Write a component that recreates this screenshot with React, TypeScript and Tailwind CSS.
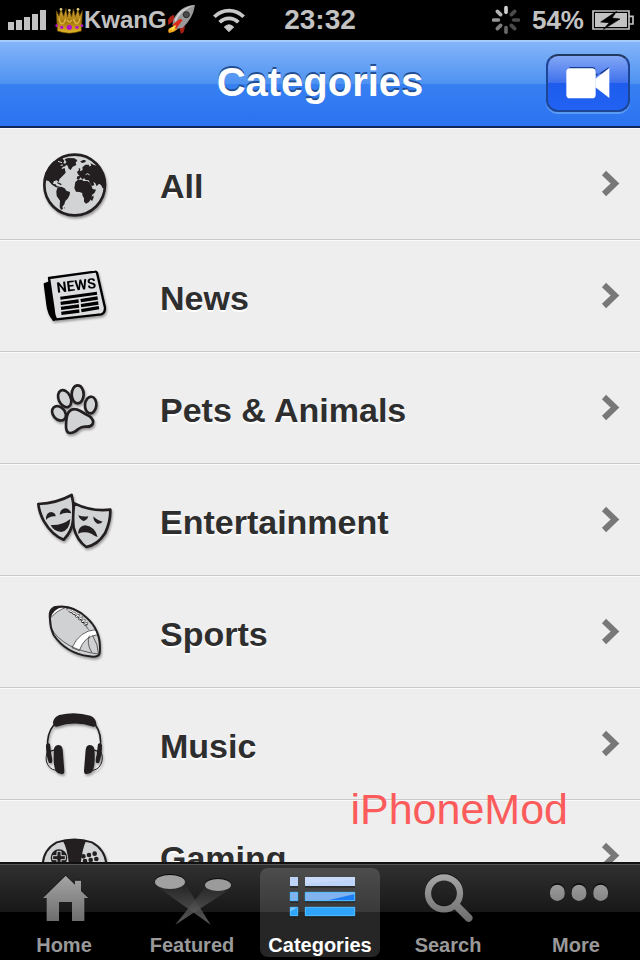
import clsx from "clsx";
import { ReactNode, useState } from "react";

const categories = [
  { label: "All", icon: <GlobeIcon /> },
  { label: "News", icon: <NewsIcon /> },
  { label: "Pets & Animals", icon: <PawIcon /> },
  { label: "Entertainment", icon: <MasksIcon /> },
  { label: "Sports", icon: <FootballIcon /> },
  { label: "Music", icon: <HeadphonesIcon /> },
  { label: "Gaming", icon: <GamepadIcon /> },
];

const tabs = [
  { label: "Home", icon: <HomeIcon /> },
  { label: "Featured", icon: <SpotlightsIcon /> },
  { label: "Categories", icon: <ListIcon /> },
  { label: "Search", icon: <SearchIcon /> },
  { label: "More", icon: <MoreIcon /> },
];

export default function App() {
  const [tab, setTab] = useState("Categories");

  return (
    <div className="flex h-screen flex-col bg-[#eeeeee] font-['Liberation_Sans',Arial,sans-serif]">
      <StatusBar />
      <NavBar title={tab} />
      <main className="relative min-h-0 flex-1 overflow-hidden">
        <ul>
          {categories.map((c) => (
            <li key={c.label}>
              <a
                href="#"
                className="flex h-28 items-center border-t border-b border-t-[#fafafa] border-b-[#c9c9c9] pr-5 pl-[30px]"
              >
                {c.icon}
                <span className="flex-1 pt-1 pl-[30px] text-[34px] leading-10 font-bold text-[#2e2e2e] [text-shadow:0_2px_0_#fff]">
                  {c.label}
                </span>
                <svg width="20" height="28" viewBox="0 0 20 28" aria-hidden="true">
                  <path d="M4 3 15 13.5 4 24" fill="none" stroke="#787878" strokeWidth="6" />
                </svg>
              </a>
            </li>
          ))}
        </ul>
        <p className="absolute right-[72px] bottom-7 text-[43px] leading-[50px] text-[#fc5b5b]">iPhoneMod</p>
      </main>
      <TabBar current={tab} onChange={(v) => setTab(v)} />
    </div>
  );
}

function StatusBar() {
  return (
    <header className="grid h-10 grid-cols-[1fr_auto_1fr] items-center bg-black px-[6px] font-bold text-[#c2c2c2]">
      <div className="flex items-center pl-[2px]">
        <svg width="38" height="20" viewBox="0 0 38 20" fill="#c2c2c2" aria-label="Signal">
          <path d="M0 12h6v8H0zM8 10h6v10H8zM16 7h6v13h-6zM24 4h6v16h-6zM32 0h6v20h-6z" />
        </svg>
        <CrownIcon />
        <span className="text-2xl">KwanG</span>
        <RocketIcon />
        <svg className="ml-4" width="32" height="24" viewBox="0 0 96 72" fill="none" stroke="#c8c8c8" aria-label="Wi-Fi">
          <path d="M4 26a62 62 0 0 1 88 0" strokeWidth="11" />
          <path d="M20 43a39 39 0 0 1 56 0" strokeWidth="11" />
          <path d="M48 71 34 57q14-13 28 0z" fill="#c8c8c8" stroke="#c8c8c8" strokeWidth="3" />
        </svg>
      </div>
      <time className="text-[28px] leading-8">23:32</time>
      <div className="flex items-center justify-end">
        <svg width="28" height="30" viewBox="-42 -45 84 90" strokeWidth="11" strokeLinecap="round" aria-label="Loading">
          <path d="M0-23V-37" stroke="#d0d0d0" />
          <path d="M16-16 26-26" stroke="#4a4a4a" />
          <path d="M23 0H37" stroke="#4a4a4a" />
          <path d="M16 16 26 26" stroke="#4a4a4a" />
          <path d="M0 23V37" stroke="#666" />
          <path d="M-16 16-26 26" stroke="#7e7e7e" />
          <path d="M-23 0H-37" stroke="#989898" />
          <path d="M-16-16-26-26" stroke="#b4b4b4" />
        </svg>
        <span className="ml-3 text-[26px] leading-8">54%</span>
        <svg className="ml-2" width="42" height="20" viewBox="0 0 126 60" aria-label="Battery charging">
          <path d="M3 3h108v54H3zM112 19h11v23h-11" fill="none" stroke="#c2c2c2" strokeWidth="5" />
          <path d="M9 9h96v42H9z" fill="#c2c2c2" />
          <path d="M74 4 26 36l26 2-18 20 50-31-24-3z" fill="#000" stroke="#000" strokeWidth="2" />
        </svg>
      </div>
    </header>
  );
}

function NavBar({ title }: { title: string }) {
  return (
    <div className="grid h-22 grid-cols-[84px_1fr_84px] items-center border-t-2 border-b-2 border-t-[#a6ccfc] border-b-[#10275a] bg-[linear-gradient(to_bottom,#84b4f8_0%,#4d92f2_50%,#3780f2_50%,#2b73f0_100%)] px-[10px]">
      <h1 className="col-start-2 pb-1 text-center text-[40px] leading-[48px] font-bold text-white [text-shadow:0_-2px_0_#234e93]">
        {title}
      </h1>
      <button
        type="button"
        aria-label="Record video"
        className="mb-[2px] flex h-[58px] items-center justify-center rounded-xl border-2 border-[#1d4696] border-t-[#24395f] bg-[linear-gradient(to_bottom,#83a7f5_0%,#3e70ec_50%,#1d5cec_50%,#2262f2_100%)] shadow-[0_2px_0_#5b9bf5]"
      >
        <svg width="44" height="34" viewBox="0 0 132 102" aria-hidden="true">
          <path d="M10 3h70q8 0 8 8v20l40-28v20H10z" fill="#173c92" />
          <rect x="1" y="7" width="88" height="90" rx="11" fill="#fff" />
          <path d="M88 38 130 6v90L88 64z" fill="#fff" />
        </svg>
      </button>
    </div>
  );
}

function TabBar({ current, onChange }: { current: string; onChange: (v: string) => void }) {
  return (
    <nav className="border-t-2 border-[#111]">
      <div className="grid grid-cols-5 border-t border-[#555] bg-[linear-gradient(to_bottom,#303030_0%,#171717_50%,#000_50%)] pt-[3px] pb-[3px]">
        {tabs.map((t) => (
          <button
            key={t.label}
            type="button"
            aria-current={current === t.label ? "page" : undefined}
            onClick={() => onChange(t.label)}
            className={clsx(
              "mx-1 flex flex-col items-center rounded-lg pt-[2px] text-xl leading-6 font-bold",
              current === t.label ? "bg-white/15 text-white" : "text-[#999]"
            )}
          >
            {t.icon}
            <span className="mt-[7px]">{t.label}</span>
          </button>
        ))}
      </div>
    </nav>
  );
}

function RowIcon({ viewBox, children }: { viewBox: string; children: ReactNode }) {
  return (
    <svg
      width="100"
      height="90"
      viewBox={viewBox}
      strokeLinejoin="round"
      aria-hidden="true"
      className="drop-shadow-[1px_2px_1px_rgba(0,0,0,0.35)]"
    >
      {children}
    </svg>
  );
}

function GlobeIcon() {
  return (
    <RowIcon viewBox="0 -5 300 270">
      <circle cx="134" cy="133" r="92" fill="#d1d3d5" />
      <g fill="#231f20">
        <path d="M43 118 46 98 58 76 72 61 80 62 86 53 96 52 103 60 100 68 109 70 106 77 98 79 94 86 104 82 107 96 100 104 94 110 88 116 87 124 80 119 71 122 69 130 77 131 80 136 92 139 90 142 78 140 66 132 56 121z" />
        <path d="M82 124 95 130 93 134 82 128zM78 70 88 64 92 70 84 76z" />
        <path d="M104 56 114 52 133 53 142 59 137 66 139 73 128 78 122 88 116 84 113 75 105 71 109 64z" />
        <path d="M82 142 94 138 104 143 109 150 120 154 119 163 113 174 106 181 103 191 97 198 99 205 93 207 89 199 90 180 80 166 79 152zM101 200 105 201 104 204z" />
        <path d="M141 94 147 88 146 82 151 84 150 92 158 88 157 80 166 72 176 72 179 78 184 74 181 67 190 72 200 75 212 86 222 110 225 142 218 143 213 133 207 129 200 137 196 128 190 123 193 133 185 137 180 127 176 119 167 118 162 112 158 117 152 110 146 117 140 115 142 107 149 106 144 101z" />
        <path d="M136 124 144 117 156 117 160 121 172 121 180 126 188 145 198 147 194 156 186 163 185 171 177 184 168 189 162 183 162 173 157 164 157 157 148 154 138 153 133 143zM183 171 190 164 191 170 187 180 182 179z" />
        <path d="M150 63 159 58 166 58 167 64 157 67zM162 90 168 88 170 94 164 95z" />
      </g>
      <path d="M84 62 96 66M92 74 99 73M167 102 173 99 179 103" fill="none" stroke="#d1d3d5" strokeWidth="3" />
      <circle cx="134" cy="133" r="91" fill="none" stroke="#231f20" strokeWidth="8" />
    </RowIcon>
  );
}

function NewsIcon() {
  return (
    <RowIcon viewBox="0 -12 300 270">
      <path d="M44 87 61 81 78 192 71 195Q55 177 52 150z" stroke="#000" strokeWidth="6" />
      <path d="M57 69 195 50Q199 49 201 53L225 158Q225 175 213 178L79 193Q72 184 71 164z" fill="#dcdee0" stroke="#000" strokeWidth="7" />
      <text x="82" y="113" fontSize="43" fontWeight="bold" fontFamily="Roboto, sans-serif" transform="rotate(-7 82 113)">
        NEWS
      </text>
      <path d="M91 130 201 115" stroke="#000" strokeWidth="9" />
      <path
        d="M92 145 146 138M93 160 147 153M94 175 148 168M152 137 203 129M153 152 205 144M154 167 207 158"
        stroke="#000"
        strokeWidth="10"
      />
    </RowIcon>
  );
}

function PawIcon() {
  return (
    <RowIcon viewBox="0 -21 300 270">
      <g fill="#d1d3d5" stroke="#231f20" strokeWidth="8">
        <ellipse cx="143" cy="73" rx="18" ry="27" />
        <ellipse cx="104" cy="86" rx="18" ry="27" transform="rotate(-25 104 86)" />
        <ellipse cx="182" cy="105" rx="17" ry="25" transform="rotate(6 182 105)" />
        <ellipse cx="87" cy="130" rx="18" ry="24" transform="rotate(-42 87 130)" />
        <path d="M116 126Q130 110 151 123 164 131 179 139 193 150 188 162 183 171 168 170 155 169 145 177 131 190 118 189 108 187 108 169 108 139 116 126z" />
      </g>
    </RowIcon>
  );
}

function MasksIcon() {
  return (
    <RowIcon viewBox="0 -15 300 270">
      <path d="M25 72Q82 69 125 45 134 80 130 117 126 155 101 179 66 165 42 124 28 99 25 72z" fill="#d1d3d5" stroke="#231f20" strokeWidth="8" />
      <path d="M133 70Q183 95 241 89 242 124 225 160 203 195 169 201 142 183 131 143 127 107 133 70z" fill="#d1d3d5" stroke="#231f20" strokeWidth="8" />
      <g fill="#231f20">
        <path d="M48 120Q47 96 65 96 77 99 77 109 59 107 48 120zM89 104Q91 87 105 85 120 86 124 100 106 95 89 104z" />
        <path d="M62 135Q96 137 121 117 119 151 94 156 71 154 62 135z" />
        <path d="M145 106Q159 111 175 109 171 122 160 123 149 119 145 106zM190 109Q200 121 218 125 211 133 202 131 190 125 190 109z" />
        <path d="M144 161Q145 138 166 136 196 141 203 171 195 169 184 161 164 153 144 161z" />
      </g>
    </RowIcon>
  );
}

function FootballIcon() {
  return (
    <RowIcon viewBox="0 -9 300 270">
      <path d="M60 88Q56 59 72 52 125 40 170 83 216 124 209 190 205 203 178 199 108 190 71 135 60 112 60 88z" fill="#cfd1d3" />
      <path d="M60 86Q78 63 108 52L90 51 71 54Q58 66 60 86zM126 173Q149 122 197 119L204 134Q162 138 148 182z" fill="#fff" stroke="#231f20" strokeWidth="2" />
      <path d="M63 82Q68 60 96 51L77 51Q57 57 59 85z" fill="#231f20" />
      <path d="M61 112Q102 180 206 192M107 52Q151 83 176 119M188 137Q205 165 205 190M178 137Q169 160 185 187" fill="none" stroke="#231f20" strokeWidth="2" />
      <path d="M116 62Q147 76 172 106M110 58 125 56M118 66 132 59M128 73 142 66M137 81 150 73M146 89 159 81M154 97 166 89M162 105 174 97" fill="none" stroke="#231f20" strokeWidth="5" />
      <path d="M115 60Q147 75 170 103M112 58 124 57M119 65 131 60M129 72 141 67M138 80 149 74M147 88 158 82M155 96 165 90M163 104 173 98" fill="none" stroke="#fff" strokeWidth="3" />
      <path d="M60 88Q56 59 72 52 125 40 170 83 216 124 209 190 205 203 178 199 108 190 71 135 60 112 60 88z" fill="none" stroke="#231f20" strokeWidth="6" />
    </RowIcon>
  );
}

function HeadphonesIcon() {
  return (
    <RowIcon viewBox="0 -3 300 270">
      <path d="M72 74Q49 101 53 145M196 74Q216 101 211 145" fill="none" stroke="#231f20" strokeWidth="5" />
      <path d="M69 66Q72 51 88 45 135 33 181 47 197 53 199 71 199 80 190 80 134 61 80 80 69 81 69 66z" fill="#231f20" />
      <path d="M56 150Q46 162 49 183 55 208 78 211M208 150Q220 162 216 183 210 208 188 211" fill="none" stroke="#231f20" strokeWidth="3" />
      <path d="M72 147Q74 135 87 135 96 136 98 149L103 212Q103 222 96 222 84 223 77 213 68 190 72 147zM193 147Q191 135 178 135 169 136 167 149L162 212Q162 222 169 222 181 223 188 213 197 190 193 147z" fill="#231f20" />
      <path d="M48 135Q52 127 60 132L64 164Q69 180 65 189H57Q48 169 48 135zM216 135Q212 127 204 132L200 164Q195 180 199 189H207Q216 169 216 135z" fill="#231f20" />
      <path d="M60 154 76 149M204 154 188 149" stroke="#231f20" strokeWidth="4" />
    </RowIcon>
  );
}

function GamepadIcon() {
  return (
    <RowIcon viewBox="90 93 300 270">
      <path d="M128 270Q124 212 170 187 223 170 276 187 322 212 320 270z" fill="#d1d3d5" stroke="#231f20" strokeWidth="6" />
      <path d="M189 184Q223 175 258 184 246 206 240 270H208Q204 208 189 184z" fill="#231f20" />
      <circle cx="177" cy="233" r="25" fill="#231f20" />
      <path d="M171 214h12v13h13v12h-13v13h-12v-13h-13v-12h13z" fill="#231f20" stroke="#d1d3d5" strokeWidth="3" />
      <g fill="#231f20">
        <circle cx="267" cy="225" r="7" />
        <circle cx="284" cy="221" r="7" />
        <circle cx="250" cy="229" r="7" />
        <circle cx="255" cy="243" r="7" />
        <circle cx="272" cy="240" r="7" />
        <circle cx="289" cy="237" r="7" />
      </g>
    </RowIcon>
  );
}

function CrownIcon() {
  return (
    <svg className="ml-[9px]" width="29" height="28" viewBox="0 0 87 84" aria-hidden="true">
      <defs>
        <linearGradient id="gold" x1="0" y1="0" x2="0" y2="1">
          <stop offset="0" stopColor="#d8b040" />
          <stop offset="0.55" stopColor="#a67708" />
          <stop offset="1" stopColor="#e2b82c" />
        </linearGradient>
      </defs>
      <path d="M4 14 12 30 18 10 26 31 33 8 37 33 43 12 50 33 55 9 61 31 69 10 74 30 82 14 79 75Q43 88 7 75z" fill="url(#gold)" stroke="#6d4c05" strokeWidth="2" />
      <path d="M12 36Q13 49 20 54 30 50 32 38M36 42Q43 54 51 42M56 38Q57 50 66 54 74 48 75 36" fill="none" stroke="#d9b548" strokeWidth="4" />
      <g fill="#e3cf7c">
        <circle cx="18" cy="10" r="4" />
        <circle cx="43" cy="13" r="4" />
        <circle cx="69" cy="10" r="4" />
      </g>
      <g fill="#b414c8">
        <circle cx="5" cy="59" r="4" />
        <circle cx="20" cy="64" r="5" />
        <circle cx="43" cy="64" r="8" />
        <circle cx="66" cy="64" r="5" />
        <circle cx="81" cy="59" r="4" />
      </g>
    </svg>
  );
}

function RocketIcon() {
  return (
    <svg width="30" height="30" viewBox="504 8 90 90" aria-hidden="true">
      <path d="M526 71 509 79Q505 87 510 92 525 91 536 80z" fill="#f0a51c" />
      <path d="M525 38Q511 40 507 54L508 68 528 53zM556 64Q560 78 552 91L545 94 542 76z" fill="#ad2015" />
      <path d="M588 8Q544 10 524 50L520 68 532 80 551 76Q582 49 588 8z" fill="#999" />
      <path d="M588 8Q545 14 527 51L529 62Q541 25 588 8z" fill="#d0d0d0" />
      <path d="M520 67 531 80 551 53 543 49z" fill="#d92c1b" />
      <path d="M513 81 530 70M519 84 528 75" stroke="#ffe14b" strokeWidth="4" />
      <circle cx="562" cy="37" r="9" fill="#4d4d4d" stroke="#222" strokeWidth="3" />
    </svg>
  );
}

function TabIcon({ viewBox, children }: { viewBox: string; children: ReactNode }) {
  return (
    <svg width="96" height="56" viewBox={viewBox} aria-hidden="true">
      <defs>
        <linearGradient id="silver" gradientUnits="userSpaceOnUse" x1="0" y1="280" x2="0" y2="430">
          <stop offset="0" stopColor="#a8a8a8" />
          <stop offset="1" stopColor="#6a6a6a" />
        </linearGradient>
      </defs>
      {children}
    </svg>
  );
}

function HomeIcon() {
  return (
    <TabIcon viewBox="48 270 288 168">
      <path d="M197 284 225 311V299H243V330L265 351H253V420H216V363H177V420H140V351H129z" fill="#151515" />
      <path d="M197 287 225 314V302H243V333L265 354H253V423H216V366H177V423H140V354H129z" fill="url(#silver)" />
    </TabIcon>
  );
}

function SpotlightsIcon() {
  return (
    <TabIcon viewBox="432 270 288 168">
      <defs>
        <linearGradient id="beam" gradientUnits="userSpaceOnUse" x1="0" y1="315" x2="0" y2="434">
          <stop offset="0" stopColor="#262626" />
          <stop offset="1" stopColor="#707070" />
        </linearGradient>
      </defs>
      <path d="M616 321 681 333 526 434 580 366z" fill="url(#beam)" opacity="0.8" />
      <path d="M474 322 632 434 554 309z" fill="url(#beam)" opacity="0.8" />
      <g fill="#0c0c0c">
        <ellipse cx="510" cy="303" rx="45" ry="21" />
        <ellipse cx="654" cy="312" rx="39" ry="18" />
      </g>
      <ellipse cx="510" cy="306" rx="45" ry="21" fill="#a1a1a1" />
      <ellipse cx="654" cy="315" rx="39" ry="18" fill="#9b9b9b" />
    </TabIcon>
  );
}

function ListIcon() {
  return (
    <TabIcon viewBox="816 270 288 168">
      <path d="M870 296h24v27h-24zM915 296h150v27H915zM870 341h24v27h-24zM915 341h150v27H915zM870 386h24v27h-24zM915 386h150v27H915z" fill="#111" opacity="0.5" />
      <path d="M870 291h24v27h-24zM915 291h150v27H915z" fill="#bed3f8" />
      <path d="M915 291h150v9Q990 301 915 312z" fill="#c9dafa" />
      <path d="M870 336h24v27h-24zM915 336h150v27H915z" fill="#83b3ef" />
      <path d="M974 363 1065 342V363z" fill="#1d7df2" />
      <path d="M870 381h24v27h-24zM915 381h150v27H915z" fill="#2ea5fb" />
      <path d="M870 381h24l-24 14z" fill="#82c9ff" />
      <path d="M871 337h22v25h-22zM916 337h148v25H916zM871 382h22v25h-22zM916 382h148v25H916z" fill="none" stroke="#50bcff" strokeWidth="3" />
    </TabIcon>
  );
}

function SearchIcon() {
  return (
    <TabIcon viewBox="240 270 288 168">
      <circle cx="372" cy="337" r="48" fill="none" stroke="#151515" strokeWidth="19" />
      <path d="M407 375 446 414" stroke="url(#silver)" strokeWidth="23" strokeLinecap="round" />
      <circle cx="372" cy="340" r="48" fill="none" stroke="url(#silver)" strokeWidth="19" />
    </TabIcon>
  );
}

function MoreIcon() {
  return (
    <TabIcon viewBox="624 270 288 168">
      {[712, 777, 842].map((x) => (
        <g key={x}>
          <rect x={x - 22} y="310" width="44" height="49" rx="22" fill="#0a0a0a" />
          <rect x={x - 22} y="314" width="44" height="49" rx="22" fill="url(#silver)" />
        </g>
      ))}
    </TabIcon>
  );
}
